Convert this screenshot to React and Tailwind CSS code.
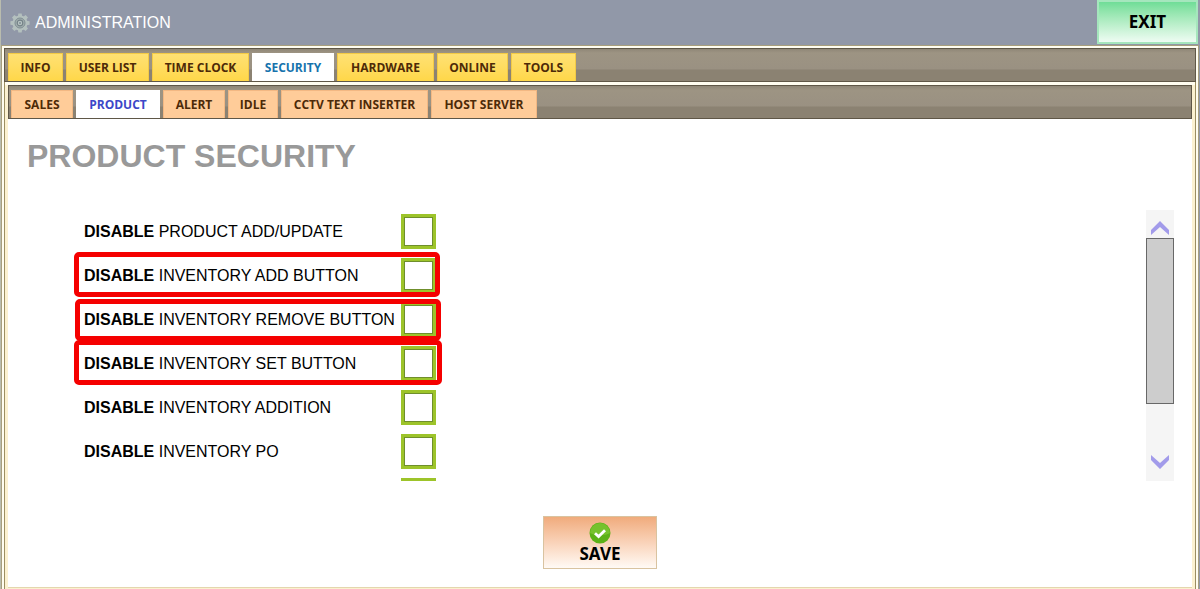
import { useState } from 'react';

const mainTabs = [
  { name: 'INFO', width: 'w-[55px]' },
  { name: 'USER LIST', width: 'w-[83px]' },
  { name: 'TIME CLOCK', width: 'w-[97px]' },
  { name: 'SECURITY', width: 'w-[82px]' },
  { name: 'HARDWARE', width: 'w-[97px]' },
  { name: 'ONLINE', width: 'w-[71px]' },
  { name: 'TOOLS', width: 'w-[65px]' }
];

const subTabs = [
  { name: 'SALES', width: 'w-[62px]' },
  { name: 'PRODUCT', width: 'w-[84px]' },
  { name: 'ALERT', width: 'w-[62px]' },
  { name: 'IDLE', width: 'w-[50px]' },
  { name: 'CCTV TEXT INSERTER', width: 'w-[147px]' },
  { name: 'HOST SERVER', width: 'w-[106px]' }
];

const options = [
  { id: 'product-update', text: 'PRODUCT ADD/UPDATE' },
  { id: 'inventory-add', text: 'INVENTORY ADD BUTTON', outline: '-top-0.5 bottom-px left-0 right-[2px]' },
  { id: 'inventory-remove', text: 'INVENTORY REMOVE BUTTON', outline: 'top-px bottom-px left-px right-px' },
  { id: 'inventory-set', text: 'INVENTORY SET BUTTON', outline: '-top-0.5 bottom-px left-0 right-0' },
  { id: 'inventory-addition', text: 'INVENTORY ADDITION' },
  { id: 'inventory-po', text: 'INVENTORY PO' },
  { id: 'inventory-other', text: '' }
];

function GearIcon() {
  return (
    <svg className="size-5" viewBox="0 0 20 20" aria-hidden="true">
      <g fill="#b4c0be">
        {[0, 45, 90, 135, 180, 225, 270, 315].map((a) => (
          <path key={a} d="M7.8 4 L8.3 0.4 H11.7 L12.2 4 Z" transform={`rotate(${a} 10 10)`} />
        ))}
        <circle cx="10" cy="10" r="7.6" />
      </g>
      <circle cx="10" cy="10" r="5" fill="#a3b0b0" stroke="#7f8d92" strokeWidth="1" />
      <circle cx="10" cy="10" r="2.8" fill="#bcc8c5" stroke="#748287" strokeWidth="1.2" />
      <circle cx="10" cy="10" r="1.2" fill="#8c999f" />
    </svg>
  );
}

function TabBar({ tabs, active, onSelect, label, padding, idleClass, activeClass }) {
  return (
    <nav
      aria-label={label}
      className={`flex h-[34px] items-end gap-[3px] border border-[#5f5747] bg-[linear-gradient(to_bottom,#8f8777_0,#9d9483_4px,#9a9182_62%,#8b8272_66%,#8b8272_100%)] ${padding}`}
    >
      {tabs.map((tab) => (
        <button
          key={tab.name}
          type="button"
          onClick={() => onSelect(tab.name)}
          className={`h-7 shrink-0 whitespace-nowrap border border-b-0 text-center font-['Open_Sans',sans-serif] text-xs font-bold ${tab.width} ${
            tab.name === active ? activeClass : idleClass
          }`}
        >
          {tab.name}
        </button>
      ))}
    </nav>
  );
}

function OptionRow({ option }) {
  return (
    <div className="relative flex h-11 items-start justify-between pt-1 pr-[6px] pl-[10px]">
      <label htmlFor={option.id} className="whitespace-nowrap leading-9">
        {option.text && <b>DISABLE</b>} {option.text}
      </label>
      <input
        id={option.id}
        type="checkbox"
        aria-label={option.text ? undefined : 'Other inventory option'}
        className="size-[35px] shrink-0 appearance-none border-[3px] border-[#9dc42a] bg-white outline outline-1 -outline-offset-4 outline-[#6f8f2c] checked:bg-[#9dc42a]"
      />
      {option.outline && (
        <span className={`pointer-events-none absolute rounded-[5px] border-[5px] border-[#f50000] ${option.outline}`} />
      )}
    </div>
  );
}

function Chevron({ down }) {
  return (
    <svg className="h-[14px] w-[18px]" viewBox="0 0 18 14" aria-hidden="true">
      <path
        d={down ? 'M0 0 L9 8 L18 0 V5 L9 14 L0 5 Z' : 'M0 14 L9 6 L18 14 V9 L9 0 L0 9 Z'}
        fill="#a29bea"
      />
    </svg>
  );
}

export default function App() {
  const [mainTab, setMainTab] = useState('SECURITY');
  const [subTab, setSubTab] = useState('PRODUCT');

  return (
    <div className="flex min-h-screen flex-col border-l border-[#b9bcae] bg-[#9198a8] pr-px font-['Liberation_Sans',Arial,sans-serif] text-base text-black">

      {/* Header */}
      <header className="flex h-[45px] items-start justify-between">
        <div className="flex h-full items-center gap-[5px] pl-[9px] text-white">
          <GearIcon />
          <h1>ADMINISTRATION</h1>
        </div>
        <button
          type="button"
          className="mr-px h-11 w-[101px] border-2 border-[#a5e6bd] bg-linear-to-b from-[#6fdd97] to-[#eefcf3] font-['Noto_Sans',sans-serif] text-[17px] font-bold"
        >
          EXIT
        </button>
      </header>

      {/* Outer panel */}
      <div className="flex flex-1 flex-col border-x border-t border-[#a89f7d] bg-[#fffdf0] px-0.5 pt-0.5">
        <TabBar
          tabs={mainTabs}
          active={mainTab}
          onSelect={setMainTab}
          label="Administration"
          padding="pl-[3px]"
          idleClass="bg-linear-to-b from-[#ffe173] to-[#ffd748] border-[#f3ca45] text-[#4d2a08]"
          activeClass="border-white bg-white text-[#1673ad]"
        />

        {/* Inner panel */}
        <div className="flex flex-1 flex-col border-x border-[#9b8e62] bg-[#fbf1d0] px-[3px] pt-[3px] shadow-[inset_0_3px_0_#fffdf0]">
          <TabBar
            tabs={subTabs}
            active={subTab}
            onSelect={setSubTab}
            label="Security"
            padding="pl-0.5"
            idleClass="bg-[#ffcc99] border-[#f3b883] text-[#4d2a08]"
            activeClass="border-white bg-white text-[#3c47c8]"
          />

          <main className="mb-px flex flex-1 flex-col border-b border-[#e4d6ae] bg-white pr-[18px] pb-[18px]">
            <h2 className="pt-[19px] pl-[19px] text-[32px] leading-9 font-bold text-[#999999]">
              PRODUCT SECURITY
            </h2>

            {/* Option list */}
            <div className="mt-9 flex h-[271px] justify-between pl-[66px]">
              <form className="w-[368px] overflow-hidden">
                {options.map((option) => (
                  <OptionRow key={option.id} option={option} />
                ))}
              </form>

              {/* Scrollbar */}
              <div className="flex w-7 flex-col bg-[#f5f5f5]">
                <button type="button" aria-label="Scroll up" className="flex h-7 items-end justify-center pb-[3px]">
                  <Chevron />
                </button>
                <div className="h-[166px] border border-[#686868] bg-[#cdcdcd]" />
                <button type="button" aria-label="Scroll down" className="mt-auto flex h-[26px] items-start justify-center">
                  <Chevron down />
                </button>
              </div>
            </div>

            {/* Save */}
            <button
              type="button"
              className="mt-[35px] ml-[18px] flex h-[53px] w-[114px] flex-col items-center self-center border border-[#d9c3a0] bg-linear-to-b from-[#f0ab7c] to-[#fffaf5] pt-[5px] font-['Noto_Sans',sans-serif] text-[17px] leading-5 font-bold"
            >
              <svg className="size-[22px] shrink-0" viewBox="0 0 22 22" aria-hidden="true">
                <circle cx="11" cy="11" r="10.5" fill="#5cb117" />
                <path d="M1 11a10 10 0 0 1 20 0c-5 3-14 3-20 0z" fill="#76c22d" />
                <path d="M6 11.2l3.6 3.4 6.4-6.4" fill="none" stroke="#fff" strokeWidth="2.8" />
              </svg>
              SAVE
            </button>
          </main>
        </div>
      </div>
    </div>
  );
}
